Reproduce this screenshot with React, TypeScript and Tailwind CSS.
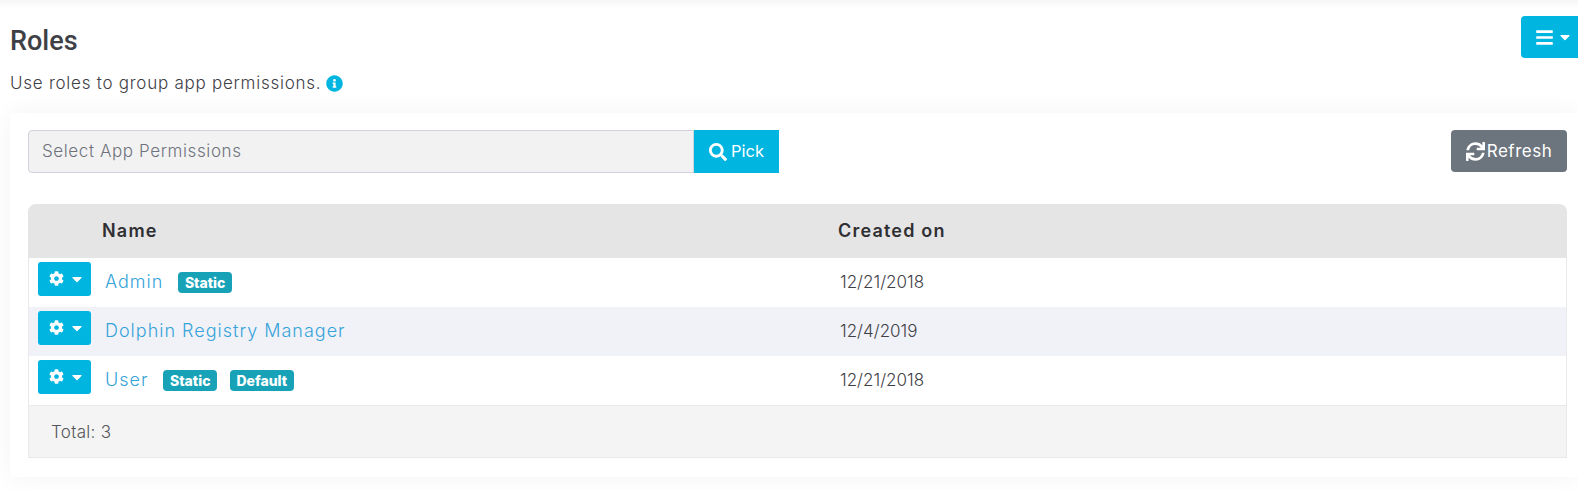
import React from "react";
import { FaBars, FaCaretDown, FaCog, FaInfoCircle, FaSearch, FaSync } from "react-icons/fa";

const roles = [
  { name: "Admin", badges: ["Static"], created: "12/21/2018", striped: false },
  { name: "Dolphin Registry Manager", badges: [], created: "12/4/2019", striped: true },
  { name: "User", badges: ["Static", "Default"], created: "12/21/2018", striped: false },
];

export default function App() {
  return (
    <div className="h-[491px] overflow-hidden bg-white font-['Inter',sans-serif] text-[#3f4047]">
      <div className="h-[9px] bg-gradient-to-b from-[#f6f6f6] to-white" />
      <div className="relative h-[91px] pl-[10px]">
        <h1 className="pt-[16px] font-['Roboto',sans-serif] text-[27px] leading-[32px] font-medium text-[#3f3f46]">Roles</h1>
        <p className="mt-[16px] flex items-center gap-[5px] text-[17px] font-light leading-[20px] tracking-[0.75px]">
          Use roles to group app permissions.
          <FaInfoCircle className="text-[17px] text-[#00b5e0]" />
        </p>
        <button className="absolute right-0 top-[7px] flex h-[42px] w-[57px] items-center gap-[3px] rounded-l-[4px] bg-[#00b5e0] pl-[14px] text-white">
          <FaBars className="text-[19px]" />
          <FaCaretDown className="text-[16px]" />
        </button>
      </div>

      <div className="ml-[10px] mt-[13px] h-[364px] bg-white pl-[18px] pr-[11px] pt-[17px] shadow-[0_0_24px_rgba(0,0,0,0.05)]">
        <div className="flex items-start justify-between">
          <div className="flex h-[43px]">
            <div className="flex w-[666px] items-center rounded-l-[4px] border border-[#d0d3dc] bg-[#f2f2f2] pl-[13px] text-[17px] font-light tracking-[0.6px] text-[#6f727d]">
              Select App Permissions
            </div>
            <button className="flex w-[85px] items-center justify-center gap-[4px] bg-[#00b5e0] text-[16.5px] text-white">
              <FaSearch className="text-[18px]" />
              Pick
            </button>
          </div>
          <button className="flex h-[42px] w-[116px] items-center justify-center gap-[2px] rounded-[4px] bg-[#6c757d] text-[17px] tracking-[0.5px] text-white">
            <FaSync className="text-[19px]" />
            <span className="pt-[1px]">Refresh</span>
          </button>
        </div>

        <div className="mt-[31px]">
          <div className="flex h-[54px] items-center rounded-t-[8px] bg-[#e5e5e5] pb-[1px] text-[18px] font-semibold tracking-[1.2px] text-[#2f2f33]">
            <div className="w-[74px]" />
            <div className="w-[736px]">Name</div>
            <div>Created on</div>
          </div>
          <div className="border-x border-[#e9e9ec]">
            {roles.map((role) => (
              <div
                key={role.name}
                className={`flex h-[49px] items-center font-light ${role.striped ? "bg-[#f0f2f8]" : "bg-white"}`}
              >
                <div className="w-[76px] pl-[9px]">
                  <button className="flex h-[34px] w-[53px] -translate-y-[4px] items-center gap-[5px] rounded-[3px] bg-[#00b5e0] pl-[11px] text-white">
                    <FaCog className="text-[15px]" />
                    <FaCaretDown className="text-[16px]" />
                  </button>
                </div>
                <div className="flex w-[735px] items-center gap-[15px]">
                  <a className="-translate-y-[1px] text-[18px] tracking-[1px] text-[#36a3d9]">{role.name}</a>
                  {role.badges.length > 0 && (
                    <span className="flex gap-[13px]">
                      {role.badges.map((badge) => (
                        <span
                          key={badge}
                          className="rounded-[4px] bg-[#17a2b8] px-[6.5px] text-[14px] leading-[21px] font-extrabold text-white"
                        >
                          {badge}
                        </span>
                      ))}
                    </span>
                  )}
                </div>
                <div className="text-[17px] text-[#3f4047]">{role.created}</div>
              </div>
            ))}
          </div>
          <div className="flex h-[53px] items-center border border-[#e9e9ec] bg-[#f4f4f4] pl-[22px] pt-[2px] text-[17px] font-light tracking-[0.3px] text-[#55565c]">
            Total: 3
          </div>
        </div>
      </div>
    </div>
  );
}
